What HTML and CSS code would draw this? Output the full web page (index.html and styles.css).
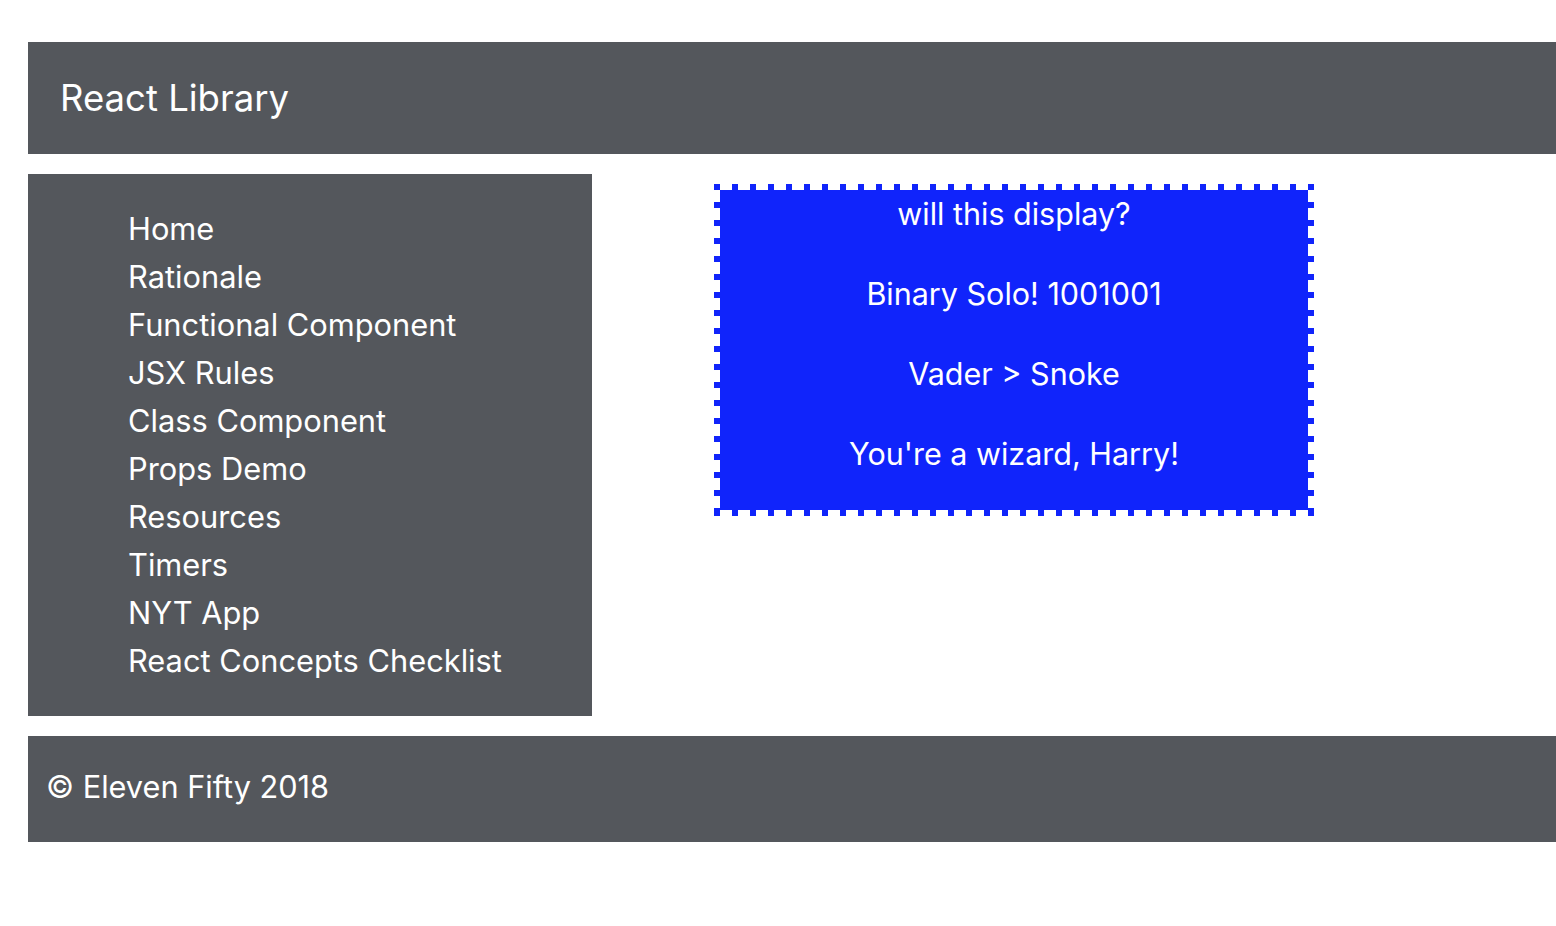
FILE: index.html
```html
<!DOCTYPE html>
<html lang="en">
<head>
<meta charset="utf-8">
<title>React Library</title>
<link rel="stylesheet" href="styles.css">
</head>
<body>
<div class="page">
  <header class="topbar">
    <span class="brand">React Library</span>
  </header>
  <div class="main">
    <nav class="sidebar">
      <ul class="nav-list">
        <li>Home</li>
        <li>Rationale</li>
        <li>Functional Component</li>
        <li>JSX Rules</li>
        <li>Class Component</li>
        <li>Props Demo</li>
        <li>Resources</li>
        <li>Timers</li>
        <li>NYT App</li>
        <li>React Concepts Checklist</li>
      </ul>
    </nav>
    <section class="content">
      <div class="demo-box">
        <p>will this display?</p>
        <p>Binary Solo! 1001001</p>
        <p>Vader &gt; Snoke</p>
        <p>You're a wizard, Harry!</p>
      </div>
    </section>
  </div>
  <footer class="footer">
    <span>© Eleven Fifty 2018</span>
  </footer>
</div>
</body>
</html>
```

FILE: styles.css
```css
html, body {
  margin: 0;
  padding: 0;
  background: #ffffff;
}

body {
  font-family: Inter, "Liberation Sans", Arial, sans-serif;
  color: #ffffff;
  overflow: hidden;
}

.page {
  padding: 42px 0 0 28px;
  display: flex;
  flex-direction: column;
  gap: 20px;
}

.topbar {
  background: #54575c;
  height: 112px;
  display: flex;
  align-items: center;
  padding-left: 32px;
}

.brand {
  font-size: 36.5px;
  line-height: 1;
}

.main {
  display: flex;
  align-items: flex-start;
}

.sidebar {
  background: #54575c;
  width: 564px;
  padding: 31px 0;
  box-sizing: border-box;
}

.nav-list {
  list-style: none;
  margin: 0;
  padding: 0 0 0 100px;
}

.nav-list li {
  font-size: 30.8px;
  line-height: 48px;
}

.content {
  padding: 10px 0 0 122px;
}

.demo-box {
  width: 600px;
  box-sizing: border-box;
  border: 6px solid transparent;
  background:
    repeating-linear-gradient(90deg, #1024fb 0 6px, transparent 6px 18px) top left / 100% 6px no-repeat border-box,
    repeating-linear-gradient(90deg, #1024fb 0 6px, transparent 6px 18px) bottom left / 100% 6px no-repeat border-box,
    repeating-linear-gradient(180deg, #1024fb 0 6px, transparent 6px 18px) top left / 6px 100% no-repeat border-box,
    repeating-linear-gradient(180deg, #1024fb 0 6px, transparent 6px 18px) top right / 6px 100% no-repeat border-box,
    linear-gradient(#1024fb, #1024fb) padding-box;
  text-align: center;
}

.demo-box p {
  margin: 0 0 32px;
  font-size: 30.5px;
  line-height: 48px;
}

.footer {
  background: #54575c;
  height: 106px;
  display: flex;
  align-items: center;
  padding-left: 18px;
}

.footer span {
  font-size: 30.7px;
  line-height: 1;
  margin-top: -3px;
}
```
